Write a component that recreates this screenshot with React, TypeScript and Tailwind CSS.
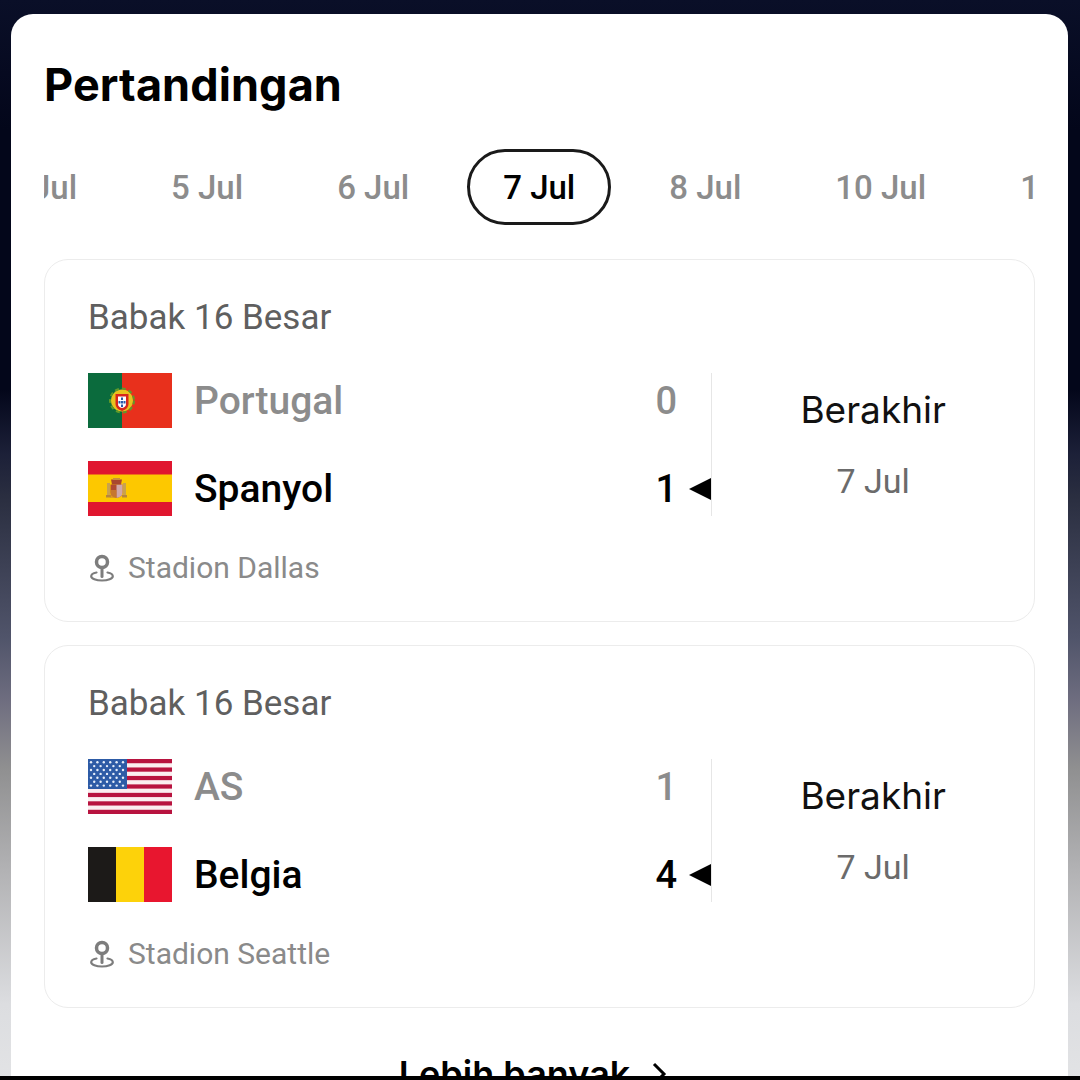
const roboto = { fontFamily: "Roboto, sans-serif" };

function Portugal() {
  return (
    <svg viewBox="0 0 84 55" className="block h-[55px] w-[84px]">
      <rect width="84" height="55" fill="#e8301c" />
      <rect width="34" height="55" fill="#0b6b3d" />
      <circle cx="34" cy="27.500" r="11" fill="#e8c21e" />
      <circle cx="34" cy="27.500" r="12" fill="none" stroke="#5f9a2a" strokeWidth="2" strokeDasharray="4 3" />
      <path d="M27.500 21h13v10q0 5-6.500 7q-6.500-2-6.500-7z" fill="#d8261c" />
      <path d="M30 23.500h8v7.500q0 3-4 4q-4-1-4-4z" fill="#fff" />
      <rect x="33" y="24.500" width="2" height="2.500" fill="#2b5aa8" />
      <rect x="33" y="28" width="2" height="2.500" fill="#2b5aa8" />
      <rect x="33" y="31.500" width="2" height="2.500" fill="#2b5aa8" />
      <rect x="30.500" y="28" width="2" height="2.500" fill="#2b5aa8" />
      <rect x="35.500" y="28" width="2" height="2.500" fill="#2b5aa8" />
    </svg>
  );
}

function Spain() {
  return (
    <svg viewBox="0 0 84 55" className="block h-[55px] w-[84px]">
      <rect width="84" height="55" fill="#e0162f" />
      <rect y="13.500" width="84" height="27.500" fill="#fdc800" />
      <rect x="19" y="22" width="3" height="13" fill="#c9a24c" />
      <rect x="35" y="22" width="3" height="13" fill="#c9a24c" />
      <rect x="18" y="34" width="5" height="2.500" fill="#b8863a" />
      <rect x="34" y="34" width="5" height="2.500" fill="#b8863a" />
      <path d="M22.500 23.500h12v8q0 4.500-6 5.500q-6-1-6-5.500z" fill="#b04a32" />
      <path d="M28.500 23.500h6v8q0 4.500-6 5.500z" fill="#cfa8a8" />
      <rect x="22.500" y="29" width="6" height="8" fill="#d08a2c" opacity="0.7" />
      <path d="M23 18.500h11l-1 5h-9z" fill="#a8472e" />
      <rect x="25" y="17" width="7" height="2" fill="#c9913a" />
    </svg>
  );
}

function Usa() {
  const stripes = [0, 2, 4, 6, 8, 10, 12];
  const stars: [number, number][] = [];
  for (let r = 0; r < 7; r++) {
    const n = r % 2 ? 5 : 6;
    for (let c = 0; c < n; c++) stars.push([(r % 2 ? 6.2 : 3) + c * 6.4, 3.2 + r * 3.9]);
  }
  return (
    <svg viewBox="0 0 84 55" className="block h-[55px] w-[84px]">
      <rect width="84" height="55" fill="#fbeef0" />
      {stripes.map((i) => (
        <rect key={i} y={(i * 55) / 13} width="84" height={55 / 13} fill="#b8133f" />
      ))}
      <rect width="39" height="30" fill="#2d5ba6" />
      {stars.map(([x, y], i) => (
        <circle key={i} cx={x} cy={y} r="1.200" fill="#e6eefa" />
      ))}
    </svg>
  );
}

function Belgium() {
  return (
    <svg viewBox="0 0 84 55" className="block h-[55px] w-[84px]">
      <rect width="28" height="55" fill="#1c1a18" />
      <rect x="28" width="28" height="55" fill="#fdd20a" />
      <rect x="56" width="28" height="55" fill="#e8162f" />
    </svg>
  );
}

function Pin() {
  return (
    <svg viewBox="0 0 24 28" className="h-[28px] w-[24px] shrink-0" fill="none">
      <circle cx="12" cy="8" r="5.500" stroke="#7d7d7d" strokeWidth="3.500" />
      <path d="M12 14v8.500" stroke="#7d7d7d" strokeWidth="3" strokeLinecap="round" />
      <path
        d="M6.500 18.500C3 19.200 1.200 20.500 1.200 22.200c0 2.400 4.800 4.300 10.800 4.300s10.800-1.900 10.800-4.300c0-1.700-1.800-3-5.300-3.700"
        stroke="#7d7d7d"
        strokeWidth="2.200"
        strokeLinecap="round"
      />
    </svg>
  );
}

function TeamRow({
  flag,
  name,
  score,
  winner,
}: {
  flag: React.ReactNode;
  name: string;
  score: string;
  winner?: boolean;
}) {
  return (
    <div className="flex h-[55px] items-center">
      {flag}
      <span
        className={`ml-[22px] flex-1 pt-[2px] text-[39px] font-medium leading-none ${winner ? "text-black" : "text-[#8c8c8c]"}`}
      >
        {name}
      </span>
      <span
        className={`w-[22px] text-center text-[38px] font-medium leading-none ${winner ? "text-black" : "text-[#8c8c8c]"}`}
      >
        {score}
      </span>
      <span className="flex w-[34px] justify-end">
        {winner && (
          <svg viewBox="0 0 22 22" className="h-[22px] w-[22px]">
            <path d="M0 11 22 0v22z" fill="#000" />
          </svg>
        )}
      </span>
    </div>
  );
}

function MatchCard({
  a,
  b,
  venue,
}: {
  a: { flag: React.ReactNode; name: string; score: string };
  b: { flag: React.ReactNode; name: string; score: string };
  venue: string;
}) {
  return (
    <div className="h-[363px] rounded-[24px] border border-[#ececec] bg-white pl-[43px] pt-[38px]">
      <div className="text-[35px] leading-[40px] text-[#5f5f5f]">Babak 16 Besar</div>
      <div className="mt-[35px] flex">
        <div className="flex w-[624px] flex-col gap-[33px]">
          <TeamRow {...a} />
          <TeamRow {...b} winner />
        </div>
        <div className="w-px bg-[#e6e6e6]" />
        <div className="flex w-[322px] flex-col items-center">
          <div
            className="mt-[15px] text-[37px] leading-[44px] text-[#111]"
            style={{ fontFamily: "Inter, sans-serif" }}
          >
            Berakhir
          </div>
          <div className="mt-[29px] text-[34px] leading-[40px] text-[#6b6b6b]">7 Jul</div>
        </div>
      </div>
      <div className="mt-[32px] flex items-center gap-[14px] pl-[2px]">
        <Pin />
        <span className="text-[30px] leading-[40px] text-[#8a8a8a]">{venue}</span>
      </div>
    </div>
  );
}

export default function App() {
  const tabs = ["4 Jul", "5 Jul", "6 Jul", "7 Jul", "8 Jul", "10 Jul", "11 Jul"];
  return (
    <div
      className="flex h-[1080px] w-[1080px] flex-col overflow-hidden bg-[linear-gradient(to_bottom,#0a0f28_0%,#03061a_12%,#03061a_36%,#1c2038_42%,#2a2e40_46%,#50546a_59%,#6f6e80_65%,#8f8f90_71%,#b0b0b2_80%,#dcdde0_93%,#e2e3e5_100%)]"
      style={roboto}
    >
      <div className="ml-[11px] mr-[12px] mt-[14px] h-[1062px] overflow-hidden rounded-t-[22px] bg-white px-[33px]">
        <h1
          className="mt-[45px] text-[45px] font-bold leading-[52px] tracking-[0.1px] text-black"
          style={{ fontFamily: "Inter, sans-serif" }}
        >
          Pertandingan
        </h1>
        <div className="mt-[38px] overflow-hidden">
          <div className="-ml-[75px] flex gap-[22px]">
            {tabs.map((t) => (
              <div
                key={t}
                className={`flex h-[76px] shrink-0 items-center whitespace-nowrap rounded-full border-[3px] px-[33px] pt-[2px] text-[33px] font-medium ${
                  t === "7 Jul" ? "border-[#1a1a1a] text-black" : "border-transparent text-[#8c8c8c]"
                }`}
              >
                {t}
              </div>
            ))}
          </div>
        </div>
        <div className="mt-[34px] flex flex-col gap-[23px]">
          <MatchCard
            a={{ flag: <Portugal />, name: "Portugal", score: "0" }}
            b={{ flag: <Spain />, name: "Spanyol", score: "1" }}
            venue="Stadion Dallas"
          />
          <MatchCard
            a={{ flag: <Usa />, name: "AS", score: "1" }}
            b={{ flag: <Belgium />, name: "Belgia", score: "4" }}
            venue="Stadion Seattle"
          />
        </div>
        <div
          className="mt-[46px] flex items-center justify-center gap-[21px] pr-[13px] text-[36px] font-semibold leading-[40px] text-black"
          style={{ fontFamily: "Inter, sans-serif" }}
        >
          Lebih banyak
          <svg viewBox="0 0 16 24" className="h-[24px] w-[16px]" fill="none">
            <path d="M3 2l10 10L3 22" stroke="#000" strokeWidth="3" />
          </svg>
        </div>
      </div>
      <div className="h-[4px] bg-black" />
    </div>
  );
}
